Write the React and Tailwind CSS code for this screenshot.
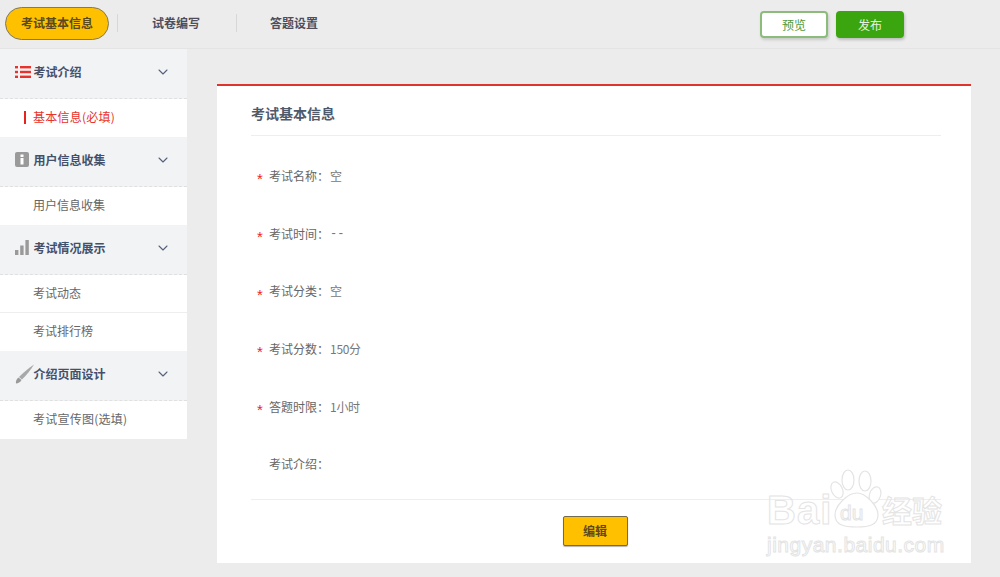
import React from 'react'
import { ChevronDown } from 'lucide-react'

const ListIcon = () => (
  <svg width="16" height="12" viewBox="0 0 16 12" className="shrink-0">
    <g fill="#e8322c">
      <rect x="0" y="0" width="3" height="2.4" />
      <rect x="0" y="4.8" width="3" height="2.4" />
      <rect x="0" y="9.6" width="3" height="2.4" />
      <rect x="5" y="0" width="11" height="2.4" />
      <rect x="5" y="4.8" width="11" height="2.4" />
      <rect x="5" y="9.6" width="11" height="2.4" />
    </g>
  </svg>
)

const InfoIcon = () => (
  <svg width="14" height="15" viewBox="0 0 14 15" className="shrink-0">
    <rect width="14" height="15" rx="2" fill="#9a9a9a" />
    <rect x="5.5" y="2.5" width="3" height="2.5" fill="#fff" />
    <rect x="5.5" y="6" width="3" height="6.5" fill="#fff" />
  </svg>
)

const BarsIcon = () => (
  <svg width="14" height="15" viewBox="0 0 14 15" className="shrink-0">
    <g fill="#9a9a9a">
      <rect x="0" y="10" width="3.4" height="5" />
      <rect x="5.2" y="5.5" width="3.4" height="9.5" />
      <rect x="10.4" y="0" width="3.4" height="15" />
    </g>
  </svg>
)

const BrushIcon = () => (
  <svg width="20" height="20" viewBox="0 0 20 20" className="shrink-0 -mr-[1px]">
    <path d="M19 0.5 C14 4 8 9 4 13 L7 15.5 C11 11.5 16 5.5 19 0.5Z" fill="#a8a8a8" />
    <path d="M3.5 13.5 L6.5 16 C5.5 18 3 19.5 1 19.5 C0.5 17.5 1.5 15 3.5 13.5Z" fill="#9a9a9a" />
  </svg>
)

const SideHead = ({ icon, title }) => (
  <div className="h-[50px] flex items-center pl-[15px] pr-[16px] pb-[4px] bg-[#f2f3f5] border-b border-dashed border-[#e0e0e0]">
    <div className="w-[18.5px] flex items-center">{icon}</div>
    <span className="text-[12px] font-bold text-[#44506a] flex-1">{title}</span>
    <ChevronDown size={16} strokeWidth={1.6} className="text-[#55607a]" />
  </div>
)

const SideItem = ({ label, active, line, wide }) => (
  <div className={`h-[38px] flex items-center pl-[33px] pb-[2px] relative bg-white text-[12px] ${wide ? 'tracking-[0.25px]' : ''} ${line ? 'border-b border-[#eeeeee]' : ''} ${active ? 'text-[#e8322c]' : 'text-[#666666]'}`}>
    {active && <span className="absolute left-[24px] top-[12px] w-[2px] h-[13px] bg-[#e8221c]" />}
    {label}
  </div>
)

const Row = ({ label, value, required = true, mono }) => (
  <div className="h-[57.7px] flex items-center pl-[6px] text-[12px] text-[#666666]">
    <span className="w-[12px] text-[#ee2222] text-[15px] leading-none pt-[6px] font-['Liberation_Sans',sans-serif]">{required ? '*' : ''}</span>
    <span>{label}：</span>
    <span className={`ml-[1px] text-[#777777] ${mono ? "font-['Liberation_Mono',monospace] text-[12px]" : 'tracking-[-0.3px]'}`}>{value}</span>
  </div>
)

const Watermark = () => (
  <div className="absolute left-[767px] top-[469px] w-[180px] h-[88px] pointer-events-none text-transparent font-['Liberation_Sans',sans-serif] [-webkit-text-stroke:1px_#e4e4e4]">
    <svg width="60" height="60" viewBox="0 0 60 60" className="absolute left-[60px] top-0" fill="#fff" stroke="#e4e4e4" strokeWidth="1.2">
      <ellipse cx="10" cy="21" rx="5.5" ry="8.5" transform="rotate(-25 10 21)" />
      <ellipse cx="21" cy="11" rx="6" ry="10" />
      <ellipse cx="38" cy="12" rx="6" ry="10" />
      <ellipse cx="48" cy="26" rx="5.5" ry="8.5" transform="rotate(20 48 26)" />
      <path d="M30 24 C38 24 51 36 51 46 C51 56 42 58 30 58 C17 58 8 56 8 46 C8 36 21 24 30 24Z" />
    </svg>
    <span className="absolute left-0 top-[21px] text-[40px] leading-none font-bold tracking-[1px]">Bai</span>
    <span className="absolute left-[73px] top-[33px] text-[21px] leading-none">du</span>
    <span className="absolute left-[115px] top-[25px] text-[30px] leading-none font-bold font-['Noto_Sans_CJK_SC',sans-serif]">经验</span>
    <span className="absolute left-0 top-[65px] text-[21px] leading-none tracking-[0.5px]">jingyan.baidu.com</span>
  </div>
)

export default function App() {
  return (
    <div className="relative w-[1000px] h-[577px] overflow-hidden bg-[#ececec] font-['Noto_Sans_CJK_SC','Liberation_Sans',sans-serif]">
      {/* top bar */}
      <div className="h-[49px] flex items-center pl-[5px] pr-[96px] border-b border-[#e4e4e4] text-[12px] font-bold text-[#4d4d5c]">
        <div className="w-[104px] h-[33px] rounded-full bg-[#ffc000] border border-[#7f7a60] flex items-center justify-center text-[#5a4a20] -mt-[2px]">
          考试基本信息
        </div>
        <span className="ml-[8px] w-px h-[18px] bg-[#d8d8d8] -mt-[2px]" />
        <span className="ml-[34px] -mt-[2px]">试卷编写</span>
        <span className="ml-[36px] w-px h-[18px] bg-[#d8d8d8] -mt-[2px]" />
        <span className="ml-[33px] -mt-[2px]">答题设置</span>
        <div className="ml-auto flex gap-[8px] font-normal mt-[1px]">
          <button className="w-[68px] h-[27px] rounded-[4px] bg-white border-2 border-[#8cbc7c] text-[#4f9a3a] shadow-[1px_2px_3px_rgba(0,0,0,0.15)]">预览</button>
          <button className="w-[68px] h-[27px] rounded-[4px] bg-[#3aa50f] text-[#e6f4df] shadow-[1px_2px_3px_rgba(0,0,0,0.2)]">发布</button>
        </div>
      </div>

      <div className="flex">
        {/* sidebar */}
        <div className="w-[187px] shrink-0">
          <SideHead icon={<ListIcon />} title="考试介绍" />
          <SideItem label="基本信息(必填)" active wide />
          <SideHead icon={<InfoIcon />} title="用户信息收集" />
          <SideItem label="用户信息收集" />
          <SideHead icon={<BarsIcon />} title="考试情况展示" />
          <SideItem label="考试动态" line />
          <SideItem label="考试排行榜" />
          <SideHead icon={<BrushIcon />} title="介绍页面设计" />
          <SideItem label="考试宣传图(选填)" wide />
        </div>

        {/* main */}
        <div className="flex-1 pl-[30px] pt-[35px]">
          <div className="w-[754px] h-[479px] bg-white border-t-2 border-[#e0332c] pl-[34px] pr-[30px]">
            <div className="h-[50px] pt-[5px] flex items-center border-b border-[#eeeeee] text-[14px] font-bold text-[#4e5a6c]">
              考试基本信息
            </div>
            <div className="pt-[11px]">
              <Row label="考试名称" value="空" />
              <Row label="考试时间" value="--" mono />
              <Row label="考试分类" value="空" />
              <Row label="考试分数" value="150分" />
              <Row label="答题时限" value="1小时" />
              <Row label="考试介绍" value="" required={false} />
            </div>
            <div className="border-t border-[#eeeeee] mt-[6px] pt-[16px] pr-[2px] flex justify-center">
              <button className="w-[65px] h-[30px] bg-[#ffc000] border border-[#6f6a50] rounded-[2px] text-[12px] font-bold text-[#5a4a20] shadow-[0_1px_1px_rgba(0,0,0,0.3)]">编辑</button>
            </div>
          </div>
        </div>
      </div>

      <Watermark />
    </div>
  )
}
